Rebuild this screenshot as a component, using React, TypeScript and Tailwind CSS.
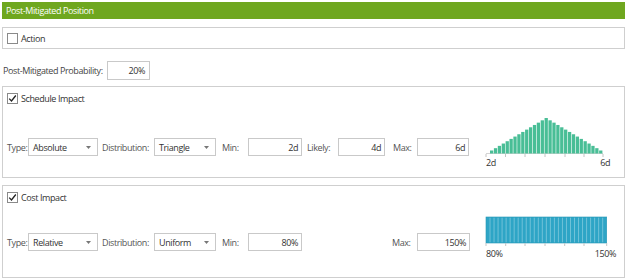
import React from 'react';

function CheckBox({ checked }: { checked?: boolean }) {
  return (
    <div className="w-[11px] h-[11px] border border-[#8a8a8a] bg-white flex items-center justify-center shrink-0">
      {checked && (
        <svg width="9" height="9" viewBox="0 0 9 9">
          <path d="M1.2 4.6 L3.5 7 L7.8 1.5" fill="none" stroke="#222" strokeWidth="1.3" />
        </svg>
      )}
    </div>
  );
}

function Select({ value, width }: { value: string; width: string }) {
  return (
    <div className={`${width} h-[18px] border border-[#c9c9c9] bg-white flex items-center justify-between pl-[4px] pr-[6px] shrink-0`}>
      <span>{value}</span>
      <svg width="5" height="3" viewBox="0 0 5 3">
        <path d="M0 0 L5 0 L2.5 3 Z" fill="#777" />
      </svg>
    </div>
  );
}

function Field({ value, width }: { value: string; width: string }) {
  return (
    <div className={`${width} h-[18px] border border-[#c9c9c9] bg-white flex items-center justify-end pr-[3px] shrink-0`}>
      {value}
    </div>
  );
}

function Label({ text, width }: { text: string; width: string }) {
  return <span className={`${width} shrink-0 whitespace-nowrap text-[#555]`}>{text}</span>;
}

const ticksTri = [2, 21.5, 41, 61, 81, 100, 119];
const ticksUni = [2, 21.7, 41, 61, 80.7, 100, 122.7];

function TriangleChart() {
  const n = 29;
  const w = 113 / n;
  return (
    <svg width="130" height="54" viewBox="0 0 130 54">
      <line x1="2" y1="37.5" x2="119" y2="37.5" stroke="#d4d4d4" strokeWidth="1" />
      {Array.from({ length: n }).map((_, i) => {
        const h = 3 + 32.5 * (1 - Math.abs(i - 14) / 14);
        return (
          <rect key={i} x={6 + i * w} y={37.5 - h} width={w - 0.6} height={h} fill="#49be96" />
        );
      })}
      {ticksTri.map((x) => (
        <line key={x} x1={x} y1="38" x2={x} y2="41" stroke="#c4c4c4" strokeWidth="1" />
      ))}
      <text x="2" y="50" fontSize="9" fill="#333" fontFamily="Open Sans, sans-serif">2d</text>
      <text x="126" y="50" fontSize="9" fill="#333" textAnchor="end" fontFamily="Open Sans, sans-serif">6d</text>
    </svg>
  );
}

function UniformChart() {
  const n = 30;
  const w = 120.7 / n;
  return (
    <svg width="134" height="44" viewBox="0 0 134 44">
      <rect x="2" y="1" width="120.7" height="26" fill="#2ea5c6" />
      {Array.from({ length: n - 1 }).map((_, i) => (
        <line key={i} x1={2 + (i + 1) * w} y1="1.5" x2={2 + (i + 1) * w} y2="26.5" stroke="#8ccfe1" strokeWidth="0.7" />
      ))}
      <rect x="2" y="1" width="120.7" height="26" fill="none" stroke="#2797b6" strokeWidth="0.6" />
      {ticksUni.map((x) => (
        <line key={x} x1={x} y1="27" x2={x} y2="30" stroke="#c4c4c4" strokeWidth="1" />
      ))}
      <text x="2" y="41" fontSize="9" fill="#333" fontFamily="Open Sans, sans-serif">80%</text>
      <text x="132" y="41" fontSize="9" fill="#333" textAnchor="end" fontFamily="Open Sans, sans-serif">150%</text>
    </svg>
  );
}

export default function App() {
  return (
    <div className="w-[627px] h-[280px] bg-white pt-[2px] px-[2px] font-['Open_Sans',sans-serif] text-[9px] tracking-[-0.4px] text-[#333] leading-none">
      <div className="h-[17px] bg-[#6fa71f] text-white pl-[4px] flex items-center">Post-Mitigated Position</div>

      <div className="mt-[8px] h-[22px] border border-[#cfcfcf] flex items-center pl-[4px] gap-[3px]">
        <CheckBox />
        <span>Action</span>
      </div>

      <div className="mt-[11px] h-[20px] flex items-center">
        <span className="w-[105px] pl-[1px] whitespace-nowrap text-[#444]">Post-Mitigated Probability:</span>
        <div className="w-[43px] h-[19px] border border-[#c9c9c9] flex items-center justify-end pr-[4px]">20%</div>
      </div>

      <div className="mt-[6px] h-[92px] border border-[#cfcfcf] pl-[4px]">
        <div className="mt-[5px] h-[12px] flex items-center gap-[3px]">
          <CheckBox checked />
          <span>Schedule Impact</span>
        </div>
        <div className="flex items-start">
          <div className="mt-[34px] flex items-center">
            <Label text="Type:" width="w-[21px]" />
            <Select value="Absolute" width="w-[70px]" />
            <span className="w-[4px]" />
            <Label text="Distribution:" width="w-[52px]" />
            <Select value="Triangle" width="w-[62px]" />
            <span className="w-[6px]" />
            <Label text="Min:" width="w-[26px]" />
            <Field value="2d" width="w-[54px]" />
            <span className="w-[5px]" />
            <Label text="Likely:" width="w-[31px]" />
            <Field value="4d" width="w-[47px]" />
            <span className="w-[8px]" />
            <Label text="Max:" width="w-[24px]" />
            <Field value="6d" width="w-[52px]" />
          </div>
          <div className="mt-[12px] ml-[15px]">
            <TriangleChart />
          </div>
        </div>
      </div>

      <div className="mt-[7px] h-[93px] border border-[#cfcfcf] pl-[4px]">
        <div className="mt-[5px] h-[12px] flex items-center gap-[3px]">
          <CheckBox checked />
          <span>Cost Impact</span>
        </div>
        <div className="flex items-start">
          <div className="mt-[30px] flex items-center">
            <Label text="Type:" width="w-[21px]" />
            <Select value="Relative" width="w-[70px]" />
            <span className="w-[4px]" />
            <Label text="Distribution:" width="w-[52px]" />
            <Select value="Uniform" width="w-[62px]" />
            <span className="w-[6px]" />
            <Label text="Min:" width="w-[26px]" />
            <Field value="80%" width="w-[54px]" />
            <span className="w-[90px]" />
            <Label text="Max:" width="w-[25px]" />
            <Field value="150%" width="w-[53px]" />
          </div>
          <div className="mt-[13px] ml-[14px]">
            <UniformChart />
          </div>
        </div>
      </div>
    </div>
  );
}
